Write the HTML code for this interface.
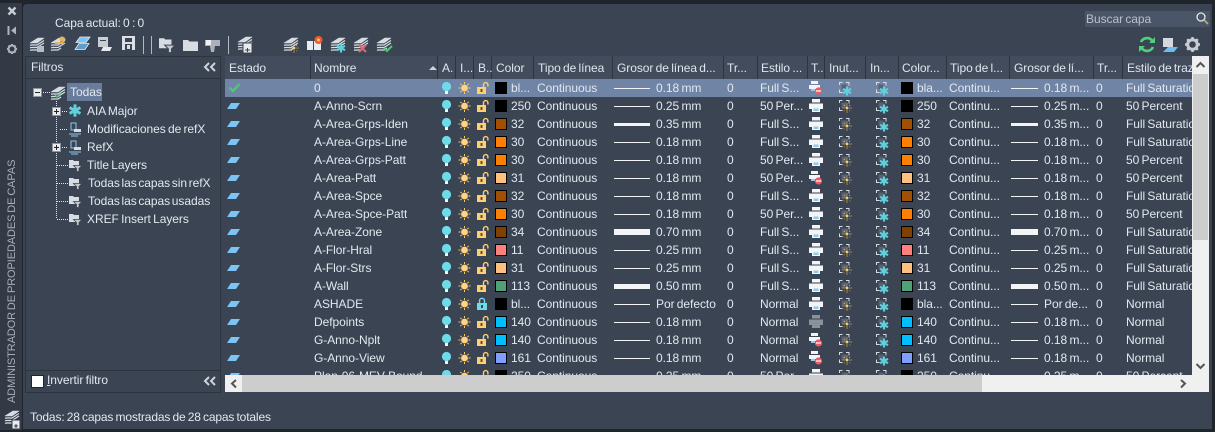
<!DOCTYPE html>
<html><head><meta charset="utf-8"><style>
html,body{margin:0;padding:0;background:#20242b}
#p{position:relative;width:1215px;height:432px;overflow:hidden;background:#20242b;font:12px/18px "Liberation Sans",sans-serif;letter-spacing:-.05px;word-spacing:-1px;color:#e2e8ef}
#p div,#p span,#p svg{position:absolute;white-space:nowrap}
#side{left:0;top:3px;width:22px;height:427px;background:#333a46}
#main{left:23px;top:4px;width:1189px;height:425px;background:#3b4453;border-radius:4px 0 0 0}
#flt{left:25px;top:56px;width:194px;height:335px;border:1px solid #2d343e}
.hl{left:26px;width:194px;height:1px;background:#2d343e}
#gr{left:225px;top:79px;width:967px;height:296px;overflow:hidden}
#gr .r{position:relative;height:18px;width:967px}
#gr .s{background:#7085a5}
#gr .r span{top:0;overflow:hidden}
.n{left:89px}.c{left:286px}.t{left:312px}.g{left:431px}.u{left:502px}.e{left:535px}
.d{left:692px}.v{left:724px}.h{left:819px}.w{left:871px}.f{left:901px}
#hd{left:225px;top:56px;width:967px;height:23px;background:#434c5c;word-spacing:-1px}
#hd span{top:3px;color:#dfe5ec}
#hd i{position:absolute;top:0;width:1px;height:23px;background:#2d343e}
#vb{left:1192px;top:56px;width:17px;height:336px;background:#f0f0f0}
#hb{left:225px;top:375px;width:984px;height:17px;background:#f0f0f0}
</style></head><body><div id="p">
<div id="side"></div><div id="main"></div>
<svg style="left:0;top:0" width="1215" height="432" viewBox="0 0 1215 432">
<defs>
<g id="st" fill="none" stroke-linejoin="round"><path d="M1 7 9 2h6L8 7z" fill="#d8dde3" stroke="#d8dde3" stroke-width=".6"/><path d="M1 9.500 2 9h6l7-4.500M1 12l1-.5h6l7-4.500M1 14.500l1-.5h6l3-2" stroke="#d8dde3" stroke-width="1.200"/></g>
<g id="fo"><path d="M0 2h5l1.500 1.500H15V13H0z" fill="#d8dde3"/></g>
<g id="ff"><path d="M0 1h4l1 1h5v7H0z" fill="#d8dde3"/><path d="M4.500 6.500h8.500L10 9.500V12.500H7.500V9.500z" fill="#c4c9d0" stroke="#3b4453" stroke-width=".8"/></g>
<g id="sf" fill="none" stroke="#5fd0dc" stroke-width="2.200"><path d="M0-4.500v9M-4-2.200l8 4.400M-4 2.200l8-4.400"/></g>
<g id="ys" stroke="#ffc95e" stroke-width="1" stroke-dasharray="1 1"><circle r="1.200" fill="#ffd37f" stroke="none"/><path d="M-4.500 0h9M0-4.500v9"/><path d="M-3-3 3 3M3-3-3 3" stroke-dasharray="1 3"/></g>
<g id="b">
<circle cx="446.500" cy="86.500" r="4.600" fill="#6fdbe8"/><rect x="445" y="91" width="3" height="3" fill="#eef3f6"/>
<circle cx="464.500" cy="88" r="3.400" fill="#ffd37f"/><path d="M464.500 82v2M464.500 92v2M458.500 88h2M468.500 88h2M460.300 83.800l1.400 1.400M467.300 90.800l1.400 1.400M468.700 83.800l-1.400 1.400M461.700 90.800l-1.400 1.400" stroke="#ffc95e" stroke-width="1"/>
<path d="M839.500 85v-2.500h3M846 82.500h3v3M839.500 89.500v3h3" fill="none" stroke="#d8dde3"/><rect x="841.500" y="84.500" width="5" height="5" fill="#59626f"/>
<path d="M876.500 85v-2.500h3M883 82.500h3v3M876.500 89.500v3h3" fill="none" stroke="#d8dde3"/><rect x="878.500" y="84.500" width="5" height="5" fill="#59626f"/>
<use href="#sf" x="884" y="91"/>
</g>
<g id="k"><rect x="477" y="87" width="9" height="7" fill="#ffcf70"/><rect x="480.500" y="89" width="2" height="3" fill="#59503f"/><path d="M483.500 87v-2.200a2.200 2.200 0 0 1 4.400 0v1.700" fill="none" stroke="#ffcf70" stroke-width="1.400"/></g>
<g id="kc"><rect x="477" y="87" width="10" height="7" fill="#6fdbe8"/><rect x="481" y="89" width="2" height="3" fill="#3b4453"/><path d="M479.500 87v-2.200a2.500 2.500 0 0 1 5 0V87" fill="none" stroke="#6fdbe8" stroke-width="1.400"/></g>
<g id="pr"><rect x="812" y="81" width="8" height="3.500" fill="#f2f4f6"/><path d="M809 85.500h14V91h-14z" fill="#f2f4f6"/><rect x="812" y="90" width="8" height="4" fill="#f2f4f6"/><rect x="813.500" y="90.500" width="5" height="2.500" fill="#8ccbf0"/></g>
<g id="pg"><rect x="812" y="81" width="8" height="3.500" fill="#89919d"/><path d="M809 85.500h14V91h-14z" fill="#89919d"/><rect x="812" y="90" width="8" height="4" fill="#89919d"/></g>
<g id="px"><rect x="811" y="81" width="7" height="3" fill="#f2f4f6"/><path d="M809 85h11v4h-11z" fill="#f2f4f6"/><rect x="811" y="89" width="4" height="2" fill="#8ccbf0"/><circle cx="818.500" cy="91" r="3.600" fill="#ee5a60"/><rect x="816" y="90.400" width="5" height="1.200" fill="#fff"/></g>
<use id="z" href="#sf" x="847" y="91"/>
<rect id="sw1" x="495.500" y="82.500" width="11" height="11" stroke="#000"/>
<g id="sw"><use href="#sw1"/><use href="#sw1" x="406"/></g>
<g id="l1" fill="#f2f4f6"><rect x="614" y="88" width="36" height="1"/><rect x="1011" y="88" width="27" height="1"/></g>
<g id="l3" fill="#f2f4f6"><rect x="614" y="87" width="36" height="3"/><rect x="1011" y="87" width="27" height="3"/></g>
<g id="l5" fill="#f2f4f6"><rect x="614" y="86" width="36" height="5"/><rect x="1011" y="86" width="27" height="5"/></g>
<g id="l6" fill="#f2f4f6"><rect x="614" y="85" width="36" height="6"/><rect x="1011" y="85" width="27" height="6"/></g>
<polygon id="es" points="231,85 240,85 236,91 227,91" fill="#7cc4f5"/>
</defs>
<!-- sidebar icons -->
<path d="M8.500 7.500 15.500 14.500M15.500 7.500 8.500 14.500" stroke="#c8cdd4" stroke-width="2.400"/>
<path d="M8.500 26v9" stroke="#aeb5bf" stroke-width="2"/><path d="M16 26.500v8l-5-4z" fill="#aeb5bf"/>
<circle cx="12" cy="49" r="3.500" fill="none" stroke="#aeb5bf" stroke-width="2"/><path d="M7 49h10M12 44v10M8.500 45.500l7 7M15.500 45.500l-7 7" stroke="#aeb5bf" stroke-width="2" stroke-dasharray="2 6 2"/>
<use href="#st" x="4" y="409"/><rect x="12" y="420" width="8" height="9" fill="#e9ecef" stroke="#333a46"/><path d="M14 426h4M16 424v4" stroke="#333a46"/>
<!-- toolbar -->
<use href="#st" x="29" y="36"/><rect x="37" y="46" width="7" height="6" fill="#aebccc"/>
<use href="#st" x="50" y="36"/><path d="M55 43h7l3-4" stroke="#e6b35e" stroke-width="2" fill="none"/><circle cx="62" cy="39" r="2.500" fill="#e6b35e"/>
<path d="M80 37h10l-4 5.500H76z" fill="#7cc4f5" stroke="#e6eaef" stroke-width=".8"/><path d="M79 43.500h10l-4 6H75z" fill="#5f9fd0" stroke="#e6eaef" stroke-width=".8"/>
<path d="M98 37h10v10H98z" fill="#c9ced5"/><rect x="100" y="40" width="6" height="1" fill="#3b4453"/><path d="M103 47h9l-2 4h-9z" fill="#e6eaef"/>
<path d="M122 36h13v14h-13z" fill="#dce0e5"/><rect x="125" y="38" width="7" height="4" fill="#3b4453"/><rect x="125" y="44" width="7" height="6" fill="#3b4453"/><rect x="127" y="45" width="3" height="4" fill="#dce0e5"/>
<path d="M143.500 36v18M151.500 36v18M228.500 36v18" stroke="#b3b9c2"/>
<g transform="translate(159 37) scale(1.250)"><use href="#ff"/></g>
<use href="#fo" x="183" y="38"/>
<path d="M205 40h15v6h-5l-1 6h-3l-1-6h-5z" fill="#aab1ba"/><path d="M206 40h5v5h-5z" fill="#eef0f2"/>
<use href="#st" x="237" y="35"/><rect x="243" y="43" width="9" height="10" fill="#e9ecef" stroke="#3b4453"/><path d="M245 50h5M247.500 48v4" stroke="#3b4453"/>
<use href="#st" x="283" y="36"/><use href="#ys" x="294" y="48"/>
<path d="M307 41h6v9h-6zM314 41h7v9h-7z" fill="#e9ecef"/><circle cx="318.500" cy="40" r="4" fill="#ee5a30"/><circle cx="318.500" cy="40" r="1.500" fill="#ffd040"/>
<use href="#st" x="330" y="36"/><use href="#sf" x="341" y="48"/>
<use href="#st" x="353" y="36"/><path d="M359 45l7 7M366 45l-7 7" stroke="#ee6068" stroke-width="2.200"/>
<use href="#st" x="376" y="36"/><path d="M384 48l3 3 5-5" stroke="#4fc878" stroke-width="2" fill="none"/>
<!-- right tools -->
<path d="M1141 42a6.500 6.500 0 0 1 11-1.500M1153 47a6.500 6.500 0 0 1-11 1.500" fill="none" stroke="#4fd07a" stroke-width="2.600"/><path d="M1155 37v6h-6zM1139 52v-6h6z" fill="#4fd07a"/>
<rect x="1163" y="38" width="10" height="9" fill="#d5d9de"/><path d="M1168 47h10l-4 5h-11z" fill="#6fbdf0"/>
<circle cx="1192.500" cy="44.500" r="4.800" fill="none" stroke="#c9cdd3" stroke-width="3"/><path d="M1192.500 37v15M1185 44.500h15M1187.200 39.200l10.600 10.600M1197.800 39.200l-10.600 10.600" stroke="#c9cdd3" stroke-width="2.400" stroke-dasharray="2.500 10 2.500"/>
</svg>
<span style="left:55px;top:14px">Capa actual: 0 : 0</span>
<div style="left:1085px;top:11px;width:125px;height:16px;background:#4a5568"></div>
<span style="left:1086px;top:10px;color:#b9c0cb">Buscar capa</span>
<svg style="left:1194px;top:11px" width="16" height="16"><circle cx="7" cy="6" r="4" fill="none" stroke="#e5e8ec" stroke-width="1.300"/><path d="M10 9l4 4" stroke="#c7a878" stroke-width="1.600"/></svg>

<div id="flt"></div>
<div class="hl" style="top:78px"></div><div class="hl" style="top:370px"></div>
<span style="left:31px;top:58px">Filtros</span>
<svg style="left:203px;top:61px" width="14" height="12" viewBox="-7 -6 14 12"><path d="M-1-4-5 0-1 4M5-4 1 0 5 4" fill="none" stroke="#cfd4da" stroke-width="2"/></svg>
<svg style="left:203px;top:375px" width="14" height="12" viewBox="-7 -6 14 12"><path d="M-1-4-5 0-1 4M5-4 1 0 5 4" fill="none" stroke="#cfd4da" stroke-width="2"/></svg>
<div style="left:31px;top:375px;width:11px;height:11px;background:#fff;border:1px solid #20242b"></div>
<span style="left:47px;top:371px"><u>I</u>nvertir filtro</span>
<!-- tree -->
<svg style="left:26px;top:80px" width="70" height="150" viewBox="26 80 70 150">
<path d="M56.500 101v118M43 92.500h7M60 111.500h8M60 129.500h8M60 147.500h8M57 165.500h11M57 183.500h11M57 201.500h11M57 219.500h11" stroke="#e2e6ea" stroke-dasharray="1 1" fill="none"/>
<rect x="33.500" y="88.500" width="8" height="8" fill="#e9ecef" stroke="#8f96a0"/><path d="M35 92.500h5" stroke="#222"/>
<g id="pl"><rect x="52.500" y="107.500" width="8" height="8" fill="#e9ecef" stroke="#8f96a0"/><path d="M54 111.500h5M56.500 109v5" stroke="#222"/></g>
<use href="#pl" y="36"/>
<use href="#st" x="50" y="85"/><path d="M55 95l2 2 4-4" stroke="#4fc878" stroke-width="1.500" fill="none"/>
<g transform="translate(75 110.500) scale(1.350)"><use href="#sf"/></g>
<g id="rf"><path d="M71 123h5v7h-5z" fill="none" stroke="#8fc8ee"/><path d="M74 129h7v3h-7z" fill="#d8dde3"/><path d="M69 134h12M71 136h7" stroke="#8fc8ee"/></g>
<use href="#rf" y="18"/>
<use href="#ff" x="69" y="159"/><use href="#ff" x="69" y="177"/><use href="#ff" x="69" y="195"/><use href="#ff" x="69" y="213"/>
</svg>
<div style="left:67px;top:83px;width:35px;height:18px;background:#6a7c9b"></div>
<span style="left:70px;top:83px">Todas</span>
<span style="left:87px;top:102px">AIA Major</span>
<span style="left:87px;top:120px">Modificaciones de refX</span>
<span style="left:87px;top:138px">RefX</span>
<span style="left:87px;top:156px">Title Layers</span>
<span style="left:88px;top:174px;word-spacing:-1.600px">Todas las capas sin refX</span>
<span style="left:88px;top:192px;word-spacing:-1.600px">Todas las capas usadas</span>
<span style="left:87px;top:210px">XREF Insert Layers</span>
<!-- grid header -->
<div id="hd">
<i style="left:85px"></i><i style="left:212px"></i><i style="left:230px"></i><i style="left:248px"></i><i style="left:266px"></i><i style="left:308px"></i><i style="left:387px"></i><i style="left:498px"></i><i style="left:532px"></i><i style="left:582px"></i><i style="left:599px"></i><i style="left:640px"></i><i style="left:673px"></i><i style="left:721px"></i><i style="left:784px"></i><i style="left:868px"></i><i style="left:897px"></i>
<span style="left:4px">Estado</span><span style="left:89px">Nombre</span>
<span style="left:217px">A.</span><span style="left:235px">I...</span><span style="left:253px">B..</span><span style="left:271px">Color</span><span style="left:313px">Tipo de línea</span><span style="left:392px">Grosor de línea d...</span><span style="left:502px">Tr...</span><span style="left:536px">Estilo ...</span><span style="left:586px">T..</span><span style="left:604px">Inut...</span><span style="left:645px">In...</span><span style="left:677px">Color...</span><span style="left:725px">Tipo de l...</span><span style="left:789px">Grosor de lí...</span><span style="left:872px">Tr...</span><span style="left:902px;width:65px;overflow:hidden">Estilo de trazado</span>
<svg style="left:204px;top:10px" width="8" height="5"><path d="M0 4 4 0l4 4z" fill="#cfd4da"/></svg>
</div>
<div id="gr">
<div class="r s"><span class="n">0</span><span class="c">bl...</span><span class="t">Continuous</span><span class="g">0.18 mm</span><span class="u">0</span><span class="e">Full S...</span><span class="d">bla...</span><span class="v">Continu...</span><span class="h">0.18 m...</span><span class="w">0</span><span class="f">Full Saturation</span></div>
<div class="r"><span class="n">A-Anno-Scrn</span><span class="c">250</span><span class="t">Continuous</span><span class="g">0.25 mm</span><span class="u">0</span><span class="e">50 Per...</span><span class="d">250</span><span class="v">Continu...</span><span class="h">0.25 m...</span><span class="w">0</span><span class="f">50 Percent</span></div>
<div class="r"><span class="n">A-Area-Grps-Iden</span><span class="c">32</span><span class="t">Continuous</span><span class="g">0.35 mm</span><span class="u">0</span><span class="e">Full S...</span><span class="d">32</span><span class="v">Continu...</span><span class="h">0.35 m...</span><span class="w">0</span><span class="f">Full Saturation</span></div>
<div class="r"><span class="n">A-Area-Grps-Line</span><span class="c">30</span><span class="t">Continuous</span><span class="g">0.18 mm</span><span class="u">0</span><span class="e">Full S...</span><span class="d">30</span><span class="v">Continu...</span><span class="h">0.18 m...</span><span class="w">0</span><span class="f">Full Saturation</span></div>
<div class="r"><span class="n">A-Area-Grps-Patt</span><span class="c">30</span><span class="t">Continuous</span><span class="g">0.18 mm</span><span class="u">0</span><span class="e">50 Per...</span><span class="d">30</span><span class="v">Continu...</span><span class="h">0.18 m...</span><span class="w">0</span><span class="f">50 Percent</span></div>
<div class="r"><span class="n">A-Area-Patt</span><span class="c">31</span><span class="t">Continuous</span><span class="g">0.18 mm</span><span class="u">0</span><span class="e">50 Per...</span><span class="d">31</span><span class="v">Continu...</span><span class="h">0.18 m...</span><span class="w">0</span><span class="f">50 Percent</span></div>
<div class="r"><span class="n">A-Area-Spce</span><span class="c">32</span><span class="t">Continuous</span><span class="g">0.18 mm</span><span class="u">0</span><span class="e">Full S...</span><span class="d">32</span><span class="v">Continu...</span><span class="h">0.18 m...</span><span class="w">0</span><span class="f">Full Saturation</span></div>
<div class="r"><span class="n">A-Area-Spce-Patt</span><span class="c">30</span><span class="t">Continuous</span><span class="g">0.18 mm</span><span class="u">0</span><span class="e">50 Per...</span><span class="d">30</span><span class="v">Continu...</span><span class="h">0.18 m...</span><span class="w">0</span><span class="f">50 Percent</span></div>
<div class="r"><span class="n">A-Area-Zone</span><span class="c">34</span><span class="t">Continuous</span><span class="g">0.70 mm</span><span class="u">0</span><span class="e">Full S...</span><span class="d">34</span><span class="v">Continu...</span><span class="h">0.70 m...</span><span class="w">0</span><span class="f">Full Saturation</span></div>
<div class="r"><span class="n">A-Flor-Hral</span><span class="c">11</span><span class="t">Continuous</span><span class="g">0.25 mm</span><span class="u">0</span><span class="e">Full S...</span><span class="d">11</span><span class="v">Continu...</span><span class="h">0.25 m...</span><span class="w">0</span><span class="f">Full Saturation</span></div>
<div class="r"><span class="n">A-Flor-Strs</span><span class="c">31</span><span class="t">Continuous</span><span class="g">0.25 mm</span><span class="u">0</span><span class="e">Full S...</span><span class="d">31</span><span class="v">Continu...</span><span class="h">0.25 m...</span><span class="w">0</span><span class="f">Full Saturation</span></div>
<div class="r"><span class="n">A-Wall</span><span class="c">113</span><span class="t">Continuous</span><span class="g">0.50 mm</span><span class="u">0</span><span class="e">Full S...</span><span class="d">113</span><span class="v">Continu...</span><span class="h">0.50 m...</span><span class="w">0</span><span class="f">Full Saturation</span></div>
<div class="r"><span class="n">ASHADE</span><span class="c">bl...</span><span class="t">Continuous</span><span class="g">Por defecto</span><span class="u">0</span><span class="e">Normal</span><span class="d">bla...</span><span class="v">Continu...</span><span class="h">Por de...</span><span class="w">0</span><span class="f">Normal</span></div>
<div class="r"><span class="n">Defpoints</span><span class="c">140</span><span class="t">Continuous</span><span class="g">0.18 mm</span><span class="u">0</span><span class="e">Normal</span><span class="d">140</span><span class="v">Continu...</span><span class="h">0.18 m...</span><span class="w">0</span><span class="f">Normal</span></div>
<div class="r"><span class="n">G-Anno-Nplt</span><span class="c">140</span><span class="t">Continuous</span><span class="g">0.18 mm</span><span class="u">0</span><span class="e">Normal</span><span class="d">140</span><span class="v">Continu...</span><span class="h">0.18 m...</span><span class="w">0</span><span class="f">Normal</span></div>
<div class="r"><span class="n">G-Anno-View</span><span class="c">161</span><span class="t">Continuous</span><span class="g">0.18 mm</span><span class="u">0</span><span class="e">Normal</span><span class="d">161</span><span class="v">Continu...</span><span class="h">0.18 m...</span><span class="w">0</span><span class="f">Normal</span></div>
<div class="r"><span class="n">Plan-06-MEV-Bound</span><span class="c">250</span><span class="t">Continuous</span><span class="g">0.25 mm</span><span class="u">0</span><span class="e">50 Per...</span><span class="d">250</span><span class="v">Continu...</span><span class="h">0.25 m...</span><span class="w">0</span><span class="f">50 Percent</span></div>
<svg style="left:0;top:0" width="967" height="296" viewBox="225 79 967 296">
<path d="M229.500 87.500l3.500 3.500 6.500-7" fill="none" stroke="#4fc878" stroke-width="2.200"/>
<use href="#es" y="18"/><use href="#es" y="36"/><use href="#es" y="54"/><use href="#es" y="72"/><use href="#es" y="90"/><use href="#es" y="108"/><use href="#es" y="126"/><use href="#es" y="144"/><use href="#es" y="162"/><use href="#es" y="180"/><use href="#es" y="198"/><use href="#es" y="216"/><use href="#es" y="234"/><use href="#es" y="252"/><use href="#es" y="270"/><use href="#es" y="288"/>
<use href="#b"/><use href="#b" y="18"/><use href="#b" y="36"/><use href="#b" y="54"/><use href="#b" y="72"/><use href="#b" y="90"/><use href="#b" y="108"/><use href="#b" y="126"/><use href="#b" y="144"/><use href="#b" y="162"/><use href="#b" y="180"/><use href="#b" y="198"/><use href="#b" y="216"/><use href="#b" y="234"/><use href="#b" y="252"/><use href="#b" y="270"/><use href="#b" y="288"/>
<use href="#k"/><use href="#k" y="18"/><use href="#k" y="36"/><use href="#k" y="54"/><use href="#k" y="72"/><use href="#k" y="90"/><use href="#k" y="108"/><use href="#k" y="126"/><use href="#k" y="144"/><use href="#k" y="162"/><use href="#k" y="180"/><use href="#k" y="198"/><use href="#kc" y="216"/><use href="#k" y="234"/><use href="#k" y="252"/><use href="#k" y="270"/><use href="#k" y="288"/>
<use href="#px"/><use href="#pr" y="18"/><use href="#pr" y="36"/><use href="#pr" y="54"/><use href="#pr" y="72"/><use href="#px" y="90"/><use href="#pr" y="108"/><use href="#pr" y="126"/><use href="#pr" y="144"/><use href="#pr" y="162"/><use href="#pr" y="180"/><use href="#pr" y="198"/><use href="#pr" y="216"/><use href="#pg" y="234"/><use href="#px" y="252"/><use href="#px" y="270"/><use href="#pr" y="288"/>
<use href="#z"/><use href="#ys" x="847" y="108"/><use href="#ys" x="847" y="126"/><use href="#ys" x="847" y="144"/><use href="#ys" x="847" y="162"/><use href="#ys" x="847" y="180"/><use href="#ys" x="847" y="198"/><use href="#ys" x="847" y="216"/><use href="#ys" x="847" y="234"/><use href="#ys" x="847" y="252"/><use href="#ys" x="847" y="270"/><use href="#ys" x="847" y="288"/><use href="#ys" x="847" y="306"/><use href="#ys" x="847" y="324"/><use href="#ys" x="847" y="342"/><use href="#ys" x="847" y="360"/><use href="#ys" x="847" y="378"/>
<use href="#sw" fill="#000"/><use href="#sw" y="18" fill="#000"/><use href="#sw" y="36" fill="#a05000"/><use href="#sw" y="54" fill="#ff8000"/><use href="#sw" y="72" fill="#ff8000"/><use href="#sw" y="90" fill="#ffbf7f"/><use href="#sw" y="108" fill="#a05000"/><use href="#sw" y="126" fill="#ff8000"/><use href="#sw" y="144" fill="#804000"/><use href="#sw" y="162" fill="#ff7f7f"/><use href="#sw" y="180" fill="#ffbf7f"/><use href="#sw" y="198" fill="#50a078"/><use href="#sw" y="216" fill="#000"/><use href="#sw" y="234" fill="#00bfff"/><use href="#sw" y="252" fill="#00bfff"/><use href="#sw" y="270" fill="#7f9fff"/><use href="#sw" y="288" fill="#000"/>
<use href="#l1"/><use href="#l1" y="18"/><use href="#l3" y="36"/><use href="#l1" y="54"/><use href="#l1" y="72"/><use href="#l1" y="90"/><use href="#l1" y="108"/><use href="#l1" y="126"/><use href="#l6" y="144"/><use href="#l1" y="162"/><use href="#l1" y="180"/><use href="#l5" y="198"/><use href="#l1" y="216"/><use href="#l1" y="234"/><use href="#l1" y="252"/><use href="#l1" y="270"/><use href="#l1" y="288"/>
</svg>
</div>
<!-- scrollbars -->
<div id="vb"></div>
<div style="left:1193px;top:74px;width:15px;height:166px;background:#cdcdcd"></div>
<svg style="left:1192px;top:56px" width="17" height="320"><path d="M4.500 11 8.500 7l4 4" fill="none" stroke="#555" stroke-width="2"/><path d="M4.500 308l4 4 4-4" fill="none" stroke="#555" stroke-width="2"/></svg>
<div id="hb"></div>
<div style="left:242px;top:375px;width:740px;height:17px;background:#cdcdcd"></div>
<svg style="left:225px;top:375px" width="967" height="17"><path d="M11 5 7 8.500l4 4" fill="none" stroke="#555" stroke-width="2"/><path d="M956 5l4 3.500-4 4" fill="none" stroke="#555" stroke-width="2"/></svg>
<span style="left:30px;top:408px;letter-spacing:-.14px">Todas: 28 capas mostradas de 28 capas totales</span>
<span style="left:12px;top:403px;color:#a7aeb9;font-size:11px;letter-spacing:-.1px;word-spacing:-1px;transform-origin:0 0;transform:rotate(-90deg) translateY(-9px)">ADMINISTRADOR DE PROPIEDADES DE CAPAS</span>
</div></body></html>
